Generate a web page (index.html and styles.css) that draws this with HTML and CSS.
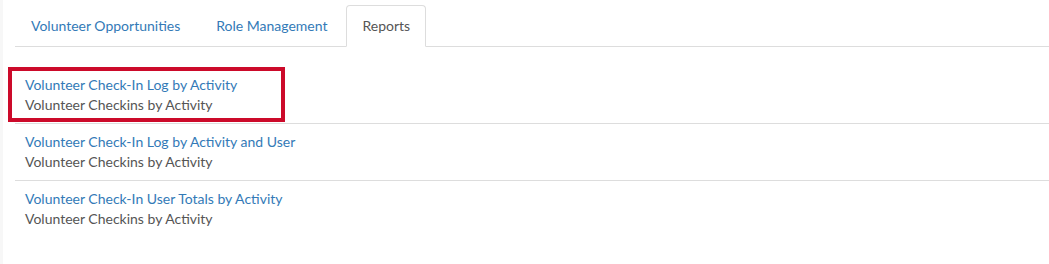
FILE: index.html
```html
<!DOCTYPE html>
<html lang="en">
<head>
  <meta charset="UTF-8">
  <title>Volunteer Reports</title>
  <link rel="stylesheet" href="styles.css">
</head>
<body>
  <div class="page">
    <ul class="tabs">
      <li><a href="#">Volunteer Opportunities</a></li>
      <li><a href="#">Role Management</a></li>
      <li class="active"><a href="#">Reports</a></li>
    </ul>

    <!-- Lista de reportes -->
    <div class="tab-content">
      <ul class="reports">
        <li class="report highlighted">
          <a href="#">Volunteer Check-In Log by Activity</a>
          <div class="report-desc">Volunteer Checkins by Activity</div>
          <div class="highlight-box"></div>
        </li>
        <li class="report">
          <a href="#">Volunteer Check-In Log by Activity and User</a>
          <div class="report-desc">Volunteer Checkins by Activity</div>
        </li>
        <li class="report">
          <a href="#">Volunteer Check-In User Totals by Activity</a>
          <div class="report-desc">Volunteer Checkins by Activity</div>
        </li>
      </ul>
    </div>
  </div>
</body>
</html>
```

FILE: styles.css
```css
body {
  margin: 0;
  font-family: Lato, "Open Sans", sans-serif;
  font-size: 14px;
  line-height: 20px;
  color: #555;
  background-color: #fff;
}

.page {
  border-left: 3px solid #f7f7f7;
  padding: 5px 0 0 12px;
  min-height: 259px;
}

.tabs {
  list-style: none;
  margin: 0;
  padding: 0;
  display: flex;
  border-bottom: 1px solid #ddd;
}

.tabs li {
  margin-bottom: -1px;
  margin-right: 2px;
}

.tabs a {
  display: block;
  padding: 10px 16px;
  color: #337ab7;
  text-decoration: none;
  border: 1px solid transparent;
  border-radius: 4px 4px 0 0;
}

.tabs li:first-child a {
  padding-left: 15px;
}

.tabs li.active a {
  padding: 10px 15px;
  color: #555;
  background-color: #fff;
  border-color: #ddd;
  border-bottom-color: transparent;
}

.tab-content {
  padding-top: 20px;
}

.reports {
  list-style: none;
  margin: 0;
  padding: 0;
}

.report {
  position: relative;
  padding: 8px 10px;
  border-bottom: 1px solid #ddd;
}

.report:last-child {
  border-bottom: none;
}

.report a {
  color: #337ab7;
  text-decoration: none;
}

.report-desc {
  color: #555;
}

.highlight-box {
  position: absolute;
  left: -7px;
  top: 0;
  width: 269px;
  height: 47px;
  border: 4px solid #cc0a2a;
}
```
